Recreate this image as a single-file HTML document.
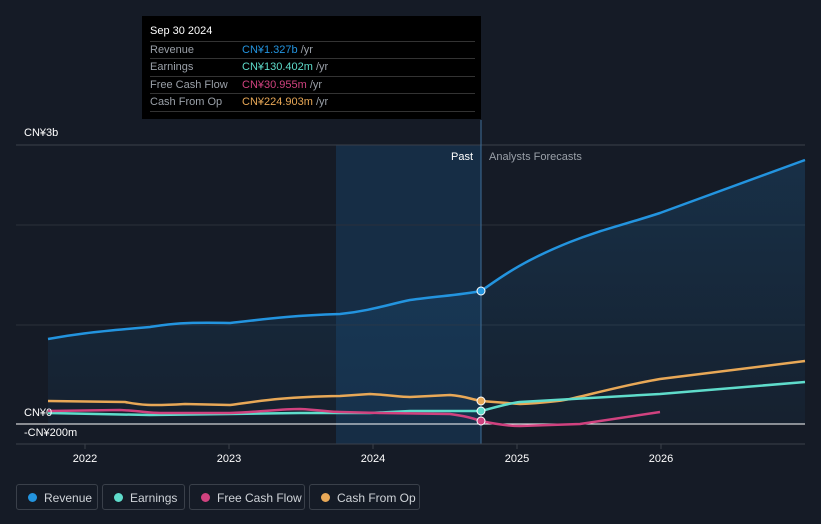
<!DOCTYPE html><html><head><style>
body{margin:0;width:821px;height:524px;background:#151b26;font-family:"Liberation Sans",sans-serif;overflow:hidden;position:relative}
.lg{position:absolute;top:484px;height:26px;border:1px solid #3a404a;border-radius:3px;color:#cfd3d8;font-size:12px;line-height:26px;box-sizing:border-box;padding-left:27px}
.lg i{position:absolute;left:11px;top:8px;width:9px;height:9px;border-radius:50%}
.tt{position:absolute;left:142px;top:16px;width:339px;height:103px;background:#000;font-size:11px;color:#fff}
.tt .r{position:absolute;left:8px;width:325px;height:17px;border-top:1px solid #333;line-height:17px;color:#9aa0a8}
.tt .r span{position:absolute;left:92px}
</style></head><body>
<svg width="821" height="524" style="position:absolute;left:0;top:0">
<defs><linearGradient id="g" x1="0" y1="0" x2="0" y2="1"><stop offset="0" stop-color="#1d5a8a" stop-opacity=".55"/><stop offset="1" stop-color="#1d5a8a" stop-opacity=".15"/></linearGradient></defs>
<rect x="336" y="145" width="145" height="299" fill="#17324d" opacity=".8"/>
<line x1="16" y1="145" x2="805" y2="145" stroke="#3a404a"/>
<line x1="16" y1="225" x2="805" y2="225" stroke="#2a303a"/>
<line x1="16" y1="325" x2="805" y2="325" stroke="#2a303a"/>
<path d="M48,339 C70,335 90,332 150,327 C170,324 180,322 230,323 C260,320 280,316 340,314 C370,311 390,304 410,300 C440,296 460,295 481,291 C500,278 520,262 570,242 C600,230 620,226 660,213 L805,160 L805,424 L48,424Z" fill="url(#g)" opacity=".6"/>
<line x1="481" y1="120" x2="481" y2="444" stroke="#3f6f99"/>
<line x1="16" y1="424" x2="805" y2="424" stroke="#fff"/>
<line x1="16" y1="444" x2="805" y2="444" stroke="#3a404a"/>
<g stroke-width="2.5" fill="none">
<path d="M48,339 C70,335 90,332 150,327 C170,324 180,322 230,323 C260,320 280,316 340,314 C370,311 390,304 410,300 C440,296 460,295 481,291 C500,278 520,262 570,242 C600,230 620,226 660,213 L805,160" stroke="#2394df"/>
<path d="M48,401 L125,402 C140,405 150,406 185,404 L230,405 C260,401 280,397 340,396 L370,394 C390,395 400,397 410,397 L450,395 C465,396 470,399 481,401 L520,404 C540,403 560,401 570,399 C600,392 630,384 660,379 L805,361" stroke="#e8a857"/>
<path d="M48,413 L150,415 L230,414 L300,413 L370,413 L410,411 L481,411 C500,406 510,403 520,402 L660,394 L805,382" stroke="#5fdccb"/>
<path d="M48,411 L120,410 C140,411 150,413 160,413 L230,413 C260,412 280,409 300,409 C320,410 330,412 340,412 L380,413 L450,414 C465,416 472,418 481,421 C500,425 510,426 520,426 L580,424 L660,412" stroke="#d0427f"/>
</g>
<circle cx="481" cy="291" r="4" fill="#2394df" stroke="#fff"/>
<circle cx="481" cy="401" r="4" fill="#e8a857" stroke="#fff"/>
<circle cx="481" cy="411" r="4" fill="#5fdccb" stroke="#fff"/>
<circle cx="481" cy="421" r="4" fill="#d0427f" stroke="#fff"/>
<g stroke="#3a404a"><line x1="85" y1="444" x2="85" y2="449"/><line x1="229" y1="444" x2="229" y2="449"/><line x1="373" y1="444" x2="373" y2="449"/><line x1="517" y1="444" x2="517" y2="449"/><line x1="661" y1="444" x2="661" y2="449"/></g>
<g font-family="Liberation Sans" font-size="11" fill="#fff">
<text x="24" y="136">CN¥3b</text><text x="24" y="416">CN¥0</text><text x="24" y="436">-CN¥200m</text>
<text x="473" y="160" text-anchor="end">Past</text><text x="489" y="160" fill="#9aa0a8">Analysts Forecasts</text>
<g text-anchor="middle"><text x="85" y="462">2022</text><text x="229" y="462">2023</text><text x="373" y="462">2024</text><text x="517" y="462">2025</text><text x="661" y="462">2026</text></g>
</g></svg>
<div class="tt"><div style="position:absolute;left:8px;top:9px;font-size:11px">Sep 30 2024</div>
<div class="r" style="top:25px">Revenue<span style="color:#2394df">CN¥1.327b <b style="font-weight:normal;color:#9aa0a8">/yr</b></span></div>
<div class="r" style="top:42px">Earnings<span style="color:#5fdccb">CN¥130.402m <b style="font-weight:normal;color:#9aa0a8">/yr</b></span></div>
<div class="r" style="top:60px">Free Cash Flow<span style="color:#d0427f">CN¥30.955m <b style="font-weight:normal;color:#9aa0a8">/yr</b></span></div>
<div class="r" style="top:77px;border-bottom:1px solid #333">Cash From Op<span style="color:#e8a857">CN¥224.903m <b style="font-weight:normal;color:#9aa0a8">/yr</b></span></div></div>
<div class="lg" style="left:16px;width:82px"><i style="background:#2394df"></i>Revenue</div>
<div class="lg" style="left:102px;width:83px"><i style="background:#5fdccb"></i>Earnings</div>
<div class="lg" style="left:189px;width:116px"><i style="background:#d0427f"></i>Free Cash Flow</div>
<div class="lg" style="left:309px;width:111px"><i style="background:#e8a857"></i>Cash From Op</div>
</body></html>
